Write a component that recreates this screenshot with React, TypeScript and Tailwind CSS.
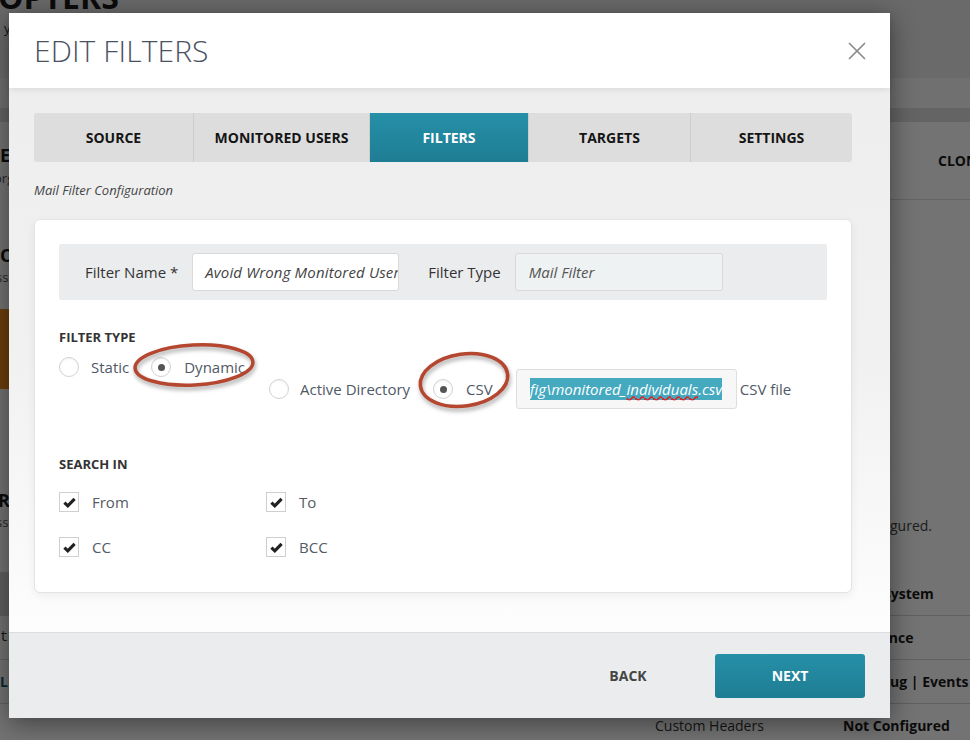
import React from "react";
import { X } from "lucide-react";

function Radio({ checked }: { checked?: boolean }) {
  return (
    <span className="w-[20px] h-[20px] rounded-full border border-[#d2d2d2] bg-white flex items-center justify-center shrink-0 shadow-[inset_0_1px_2px_rgba(0,0,0,0.06)]">
      {checked && <span className="w-[7px] h-[7px] rounded-full bg-[#555]" />}
    </span>
  );
}

function Check({ label }: { label: string }) {
  return (
    <div className="flex items-center gap-[13px] h-[20px]">
      <span className="w-[20px] h-[20px] border border-[#cfcfcf] bg-white flex items-center justify-center shrink-0">
        <svg width="13" height="11" viewBox="0 0 13 11">
          <path d="M1.4 5.6 L4.8 8.8 L11.6 1.8" stroke="#222" strokeWidth="3.2" fill="none" strokeLinejoin="miter" />
        </svg>
      </span>
      <span className="text-[15px] text-[#555b63]">{label}</span>
    </div>
  );
}

const tabs = [
  { label: "SOURCE", w: "w-[159px]" },
  { label: "MONITORED USERS", w: "w-[176px]" },
  { label: "FILTERS", w: "w-[159px]", active: true },
  { label: "TARGETS", w: "w-[162px]" },
  { label: "SETTINGS", w: "flex-1" },
];

function BackgroundPage() {
  return (
    <div className="w-[970px] h-[740px] overflow-hidden bg-white flex flex-col text-[#1a1a1a]">
      <div className="h-[78px] shrink-0 bg-[#ececec] flex flex-col">
        <div className="text-[32px] font-bold leading-[32px] -mt-[19px] ml-[-2px]">OPTERS</div>
        <div className="text-[13px] mt-[6px] ml-[4px] text-[#333]">y</div>
      </div>
      <div className="h-[30px] shrink-0 bg-[#f8f8f8]" />
      <div className="h-[14px] shrink-0 bg-[#dedede]" />
      <div className="h-[450px] shrink-0 flex justify-between">
        <div className="w-[200px] flex flex-col">
          <div className="mt-[22px] text-[18px] font-bold leading-[22px]">E</div>
          <div className="text-[13px] text-[#555] leading-[18px] mt-[3px] ml-[-6px]">org</div>
          <div className="mt-[57px] text-[18px] font-bold leading-[22px]">O</div>
          <div className="text-[13px] text-[#555] leading-[18px] mt-[2px] ml-[-4px]">ss</div>
          <div className="mt-[23px] w-[60px] h-[80px] ml-[-30px] rounded-[22px] bg-[#f08a1c]" />
          <div className="mt-[100px] text-[18px] font-bold leading-[22px] ml-[-2px]">RS</div>
          <div className="text-[13px] text-[#555] leading-[18px] mt-[2px] ml-[-4px]">ss</div>
        </div>
        <div className="w-[80px] flex flex-col">
          <div className="mt-[28px] text-[14px] font-bold pl-[48px]">CLONE</div>
          <div className="mt-[28px] border-b border-[#dcdcdc]" />
          <div className="mt-[315px] text-[14px] text-[#444] whitespace-nowrap">gured.</div>
        </div>
      </div>
      <div className="flex flex-col shrink-0 text-[14px]">
        {[
          { left: "", l: "", v: "Local System", dark: true },
          { left: "t", l: "", v: "Reference" },
          { left: "L", l: "", v: "I | Debug | Events" },
          { left: "", l: "Custom Headers", v: "Not Configured" },
        ].map((r, i) => (
          <div key={i} className="h-[44px] shrink-0 flex items-center border-b border-[#d6d6d6]">
            <div className={`w-[655px] h-full flex items-center ${r.dark ? "bg-[#d4d4d4]" : ""}`}>
              <span className={`text-[14px] ${r.left === "L" ? "font-bold text-[#0d5e70]" : "font-mono text-[#333]"}`}>{r.left}</span>
            </div>
            <div className="w-[188px] text-[#333]">{r.l}</div>
            <div className="flex-1 font-bold whitespace-nowrap">{r.v}</div>
          </div>
        ))}
      </div>
    </div>
  );
}

export default function App() {
  return (
    <div className="relative w-[970px] h-[740px] overflow-hidden font-['Open_Sans',sans-serif]">
      <BackgroundPage />
      <div className="absolute inset-0 bg-black/[0.55]" />

      <div className="absolute left-[9px] top-[13px] w-[881px] h-[705px] flex flex-col shadow-[0_5px_25px_rgba(0,0,0,0.45)]">
        <div className="relative z-10 h-[75px] bg-white flex items-center justify-between pl-[25px] pr-[18px] shadow-[0_2px_6px_rgba(0,0,0,0.08)]">
          <h1 className="text-[30px] font-light text-[#4a5262] tracking-[0.1px]">EDIT FILTERS</h1>
          <X size={30} strokeWidth={1.4} className="text-[#8c8c8c]" />
        </div>

        <div className="flex-1 bg-linear-to-b from-[#eeeeee] via-[#f1f1f1] to-[#fdfdfd] pt-[25px] pl-[25px] pr-[38px]">
          <div className="flex h-[49px] rounded-[3px] overflow-hidden">
            {tabs.map((t, i) => (
              <div
                key={t.label}
                className={`${t.w} flex items-center justify-center text-[14px] font-bold ${
                  t.active
                    ? "bg-linear-to-b from-[#2590a8] to-[#1f7d93] text-white"
                    : "bg-[#dddddd] text-[#151515]"
                } ${i > 0 ? "border-l border-[#cdcdcd]" : ""}`}
              >
                {t.label}
              </div>
            ))}
          </div>

          <div className="mt-[19px] text-[13px] italic text-[#444] leading-[18px]">Mail Filter Configuration</div>

          <div className="mt-[20px] bg-white rounded-[6px] border border-[#e4e4e4] shadow-[0_3px_10px_rgba(0,0,0,0.06)] pt-[24px] px-[24px] pb-[35px]">
            <div className="h-[56px] bg-[#ebecee] rounded-[2px] flex items-center pl-[26px]">
              <span className="text-[15px] text-[#333]">Filter Name *</span>
              <div className="ml-[14px] w-[207px] h-[38px] border border-[#d9d9d9] rounded-[3px] bg-white px-[12px] flex items-center overflow-hidden">
                <span className="italic text-[15px] text-[#444] whitespace-nowrap tracking-[0.15px]">Avoid Wrong Monitored Users</span>
              </div>
              <span className="ml-[29px] text-[15px] text-[#333]">Filter Type</span>
              <div className="ml-[14px] w-[208px] h-[38px] border border-[#d9d9d9] rounded-[3px] bg-[#eef2f2] px-[13px] flex items-center">
                <span className="italic text-[15px] text-[#555]">Mail Filter</span>
              </div>
            </div>

            <div className="mt-[28px] text-[13px] font-bold text-[#333] leading-[18px]">FILTER TYPE</div>

            <div className="mt-[11px] flex items-start">
              <div className="flex items-center h-[20px]">
                <Radio />
                <span className="ml-[12px] text-[15px] text-[#505966]">Static</span>
              </div>
              <div className="flex items-center h-[20px] ml-[22px]">
                <Radio checked />
                <span className="ml-[13px] text-[15px] text-[#505966]">Dynamic</span>
              </div>
              <div className="flex items-center mt-[12px] ml-[24px]">
                <Radio />
                <span className="ml-[11px] text-[15px] text-[#505966]">Active Directory</span>
                <span className="ml-[23px]"><Radio checked /></span>
                <span className="ml-[13px] text-[15px] text-[#505966]">CSV</span>
                <div className="ml-[23px] w-[221px] h-[40px] border border-[#dedede] rounded-[3px] bg-[#f7f7f7] pl-[13px] flex items-center overflow-hidden">
                  <span className="italic text-[15px] text-white bg-[#45a9bf] whitespace-nowrap leading-[22px]">
                    fig\monitored_<span className="underline decoration-wavy decoration-[#e02020] underline-offset-[0px]">individuals</span>.csv
                  </span>
                </div>
                <span className="ml-[3px] text-[15px] text-[#505966]">CSV file</span>
              </div>
            </div>

            <div className="mt-[46px] text-[13px] font-bold text-[#333] leading-[18px]">SEARCH IN</div>

            <div className="mt-[19px] grid grid-cols-[207px_1fr] gap-y-[25px]">
              <Check label="From" />
              <Check label="To" />
              <Check label="CC" />
              <Check label="BCC" />
            </div>
          </div>
        </div>

        <div className="h-[86px] bg-[#ebecee] border-t border-[#dcdcdc] flex items-center justify-end pr-[25px] gap-[12px]">
          <button className="w-[150px] h-[44px] text-[14px] font-bold text-[#444]">BACK</button>
          <button className="w-[150px] h-[44px] rounded-[3px] bg-linear-to-b from-[#2590a8] to-[#1f7d93] text-[14px] font-bold text-white">NEXT</button>
        </div>
      </div>

      <svg className="absolute left-[125px] top-[335px] pointer-events-none" width="145" height="62" style={{ filter: "drop-shadow(1px 3px 2px rgba(0,0,0,0.35))" }}>
        <ellipse cx="69" cy="30" rx="59" ry="20" transform="rotate(-3 69 30)" fill="none" stroke="#b5462f" strokeWidth="3.5" />
      </svg>
      <svg className="absolute left-[410px] top-[345px] pointer-events-none" width="110" height="72" style={{ filter: "drop-shadow(1px 3px 2px rgba(0,0,0,0.35))" }}>
        <ellipse cx="54" cy="35" rx="44" ry="26" transform="rotate(-8 54 35)" fill="none" stroke="#b5462f" strokeWidth="3.5" />
      </svg>
    </div>
  );
}
